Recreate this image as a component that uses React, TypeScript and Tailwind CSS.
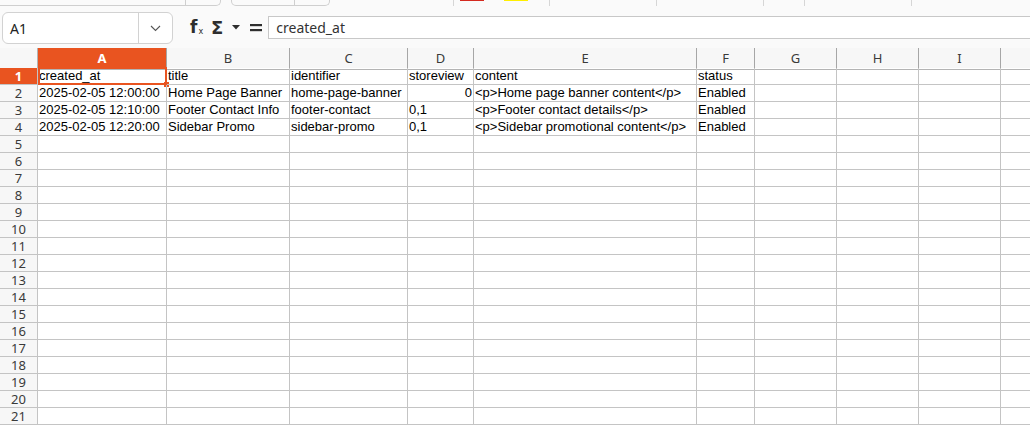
import React from "react";

const GRID =
  "grid grid-cols-[38px_129px_123px_118px_66px_223px_58px_82px_82px_82px_1fr]";

const LETTERS = ["A", "B", "C", "D", "E", "F", "G", "H", "I", ""];

type Cell = { t: string; right?: boolean };

const DATA: Cell[][] = [
  [{ t: "created_at" }, { t: "title" }, { t: "identifier" }, { t: "storeview" }, { t: "content" }, { t: "status" }],
  [
    { t: "2025-02-05 12:00:00" },
    { t: "Home Page Banner" },
    { t: "home-page-banner" },
    { t: "0", right: true },
    { t: "<p>Home page banner content</p>" },
    { t: "Enabled" },
  ],
  [
    { t: "2025-02-05 12:10:00" },
    { t: "Footer Contact Info" },
    { t: "footer-contact" },
    { t: "0,1" },
    { t: "<p>Footer contact details</p>" },
    { t: "Enabled" },
  ],
  [
    { t: "2025-02-05 12:20:00" },
    { t: "Sidebar Promo" },
    { t: "sidebar-promo" },
    { t: "0,1" },
    { t: "<p>Sidebar promotional content</p>" },
    { t: "Enabled" },
  ],
];

const ORANGE = "bg-[#e95420]";

function TopStrip() {
  return (
    <div className="flex h-[6px] items-start overflow-hidden">
      <div className="ml-[-5px] w-[226px] h-[6px] border border-t-0 border-[#cfcfcf] rounded-b-[5px] flex justify-end shrink-0">
        <div className="w-px h-full bg-[#cfcfcf] mr-[34px]" />
      </div>
      <div className="ml-[10px] w-[99px] h-[6px] border border-t-0 border-[#cfcfcf] rounded-b-[5px] flex justify-end shrink-0">
        <div className="w-px h-full bg-[#cfcfcf] mr-[34px]" />
      </div>
      <div className="ml-[123px] w-px h-[6px] bg-[#d6d6d6] shrink-0" />
      <div className="ml-[6px] w-[24px] h-px bg-[#d42a20] shrink-0" />
      <div className="ml-[20px] w-[24px] h-px bg-[#ffef00] shrink-0" />
      <div className="ml-[21px] w-px h-[6px] bg-[#d6d6d6] shrink-0" />
      <div className="ml-[106px] w-px h-[6px] bg-[#d6d6d6] shrink-0" />
      <div className="ml-[106px] w-px h-[6px] bg-[#d6d6d6] shrink-0" />
      <div className="ml-[40px] w-px h-[6px] bg-[#d6d6d6] shrink-0" />
      <div className="ml-[106px] w-px h-[6px] bg-[#d6d6d6] shrink-0" />
    </div>
  );
}

function FormulaBar() {
  return (
    <div className="flex items-start h-[42px]">
      <div className="ml-[2px] mt-[6px] w-[171px] h-[32px] border border-[#d2d2d2] rounded-[6px] bg-white flex shrink-0">
        <div className="w-[136px] border-r border-[#d2d2d2] flex items-center pl-[7px] text-[14px] text-[#222] font-['Noto_Sans',sans-serif]">
          A1
        </div>
        <div className="flex-1 flex items-center justify-center">
          <svg width="11" height="7" viewBox="0 0 11 7">
            <polyline points="1,1 5.5,5.5 10,1" fill="none" stroke="#555" strokeWidth="1.1" />
          </svg>
        </div>
      </div>
      <div className="mt-[10px] h-[23px] flex items-center ml-[17px] text-[#2e2e2e] shrink-0">
        <div className="flex items-end w-[12px]">
          <span className="text-[17px] font-semibold leading-none font-['DejaVu_Sans',sans-serif]">f</span>
          <span className="text-[8px] leading-none ml-[1px] font-['DejaVu_Sans',sans-serif]">x</span>
        </div>
        <span className="ml-[9px] text-[18px] font-bold leading-none font-['DejaVu_Sans',sans-serif]">Σ</span>
        <svg className="ml-[9px]" width="8" height="5" viewBox="0 0 8 5">
          <polygon points="0,0 8,0 4,4.5" fill="#2e2e2e" />
        </svg>
        <svg className="ml-[10px]" width="12" height="9" viewBox="0 0 12 9">
          <rect x="0" y="1" width="12" height="2.2" fill="#2e2e2e" />
          <rect x="0" y="6" width="12" height="2.2" fill="#2e2e2e" />
        </svg>
      </div>
      <div className="ml-[6px] mt-[10px] h-[23px] flex-1 border border-r-0 border-[#c8c8c8] bg-white flex items-center pl-[7px] text-[14px] text-[#333] font-['Noto_Sans',sans-serif]">
        created_at
      </div>
    </div>
  );
}

function HeaderRow() {
  return (
    <div className={`${GRID} h-[20px] bg-[#f7f7f7] font-['Noto_Sans',sans-serif] text-[13px] text-[#3a3a3a]`}>
      <div className="border-r border-b border-r-[#b4b4b4] border-b-[#b4b4b4]" />
      {LETTERS.map((l, i) => (
        <div
          key={i}
          className={`flex items-center justify-center pt-[1px] border-b border-b-[#b4b4b4] ${
            i < 9 ? "border-r border-r-[#a6a6a6]" : ""
          } ${i === 0 ? `${ORANGE} text-white font-bold` : ""}`}
        >
          {l}
        </div>
      ))}
    </div>
  );
}

function DataRow({ n }: { n: number }) {
  const row = DATA[n - 1];
  const selected = n === 1;
  return (
    <div className={`${GRID} h-[17px]`}>
      <div
        className={`border-r border-b border-[#c4c4c4] flex items-center justify-center text-[13px] font-['Noto_Sans',sans-serif] leading-none ${
          selected ? `${ORANGE} text-white font-bold` : "bg-[#f7f7f7] text-[#3a3a3a]"
        }`}
      >
        {n}
      </div>
      {LETTERS.map((_, i) => {
        const c = row ? row[i] : undefined;
        return (
          <div
            key={i}
            className={`relative border-b border-[#c4c4c4] ${i < 9 ? "border-r" : ""} px-[1px] text-[13px] leading-[16px] text-black whitespace-nowrap overflow-visible font-['Liberation_Sans',Arial,sans-serif] ${
              c && c.right ? "text-right" : "text-left"
            }`}
          >
            {c ? c.t : ""}
            {selected && i === 0 && (
              <>
                <div className="absolute left-0 top-[-1px] right-[-1px] bottom-[-1px] border-2 border-[#e95420] pointer-events-none" />
                <div className="absolute right-[-3px] bottom-[-3px] w-[5px] h-[5px] bg-[#e95420]" />
              </>
            )}
          </div>
        );
      })}
    </div>
  );
}

export default function App() {
  const rows = Array.from({ length: 21 }, (_, i) => i + 1);
  return (
    <div className="w-[1030px] h-[425px] overflow-hidden bg-white">
      <div className="bg-[#fafafa]">
        <TopStrip />
        <FormulaBar />
      </div>
      <HeaderRow />
      {rows.map((n) => (
        <DataRow key={n} n={n} />
      ))}
    </div>
  );
}
